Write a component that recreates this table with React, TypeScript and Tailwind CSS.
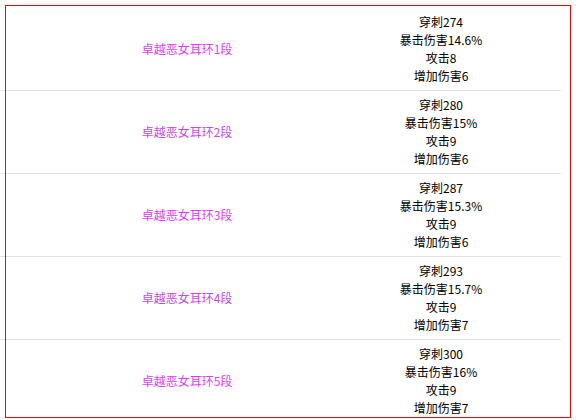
const rows = [
  { name: "卓越恶女耳环1段", stats: ["穿刺274", "暴击伤害14.6%", "攻击8", "增加伤害6"] },
  { name: "卓越恶女耳环2段", stats: ["穿刺280", "暴击伤害15%", "攻击9", "增加伤害6"] },
  { name: "卓越恶女耳环3段", stats: ["穿刺287", "暴击伤害15.3%", "攻击9", "增加伤害6"] },
  { name: "卓越恶女耳环4段", stats: ["穿刺293", "暴击伤害15.7%", "攻击9", "增加伤害7"] },
  { name: "卓越恶女耳环5段", stats: ["穿刺300", "暴击伤害16%", "攻击9", "增加伤害7"] },
];

export default function App() {
  return (
    <div className="relative w-[576px] h-[420px] overflow-hidden bg-white text-[12px] leading-[18px] text-black font-['SimSun','Noto_Sans_CJK_SC',sans-serif]">
      <div className="w-[561px] pt-[8px]">
        {rows.map((r, i) => (
          <div
            key={r.name}
            className="grid grid-cols-[53px_268px_240px] border-b border-[#e3e3e3] py-[5px]"
          >
            <div />
            <div
              className={
                "flex items-center justify-center " +
                (i % 2 === 0 ? "text-[#e03cf8]" : "text-[#c04ae8]")
              }
            >
              {r.name}
            </div>
            <div className="flex flex-col items-center">
              {r.stats.map((s) => (
                <span key={s}>{s}</span>
              ))}
            </div>
          </div>
        ))}
      </div>
      {/* red frame sits over the table */}
      <div className="pointer-events-none absolute left-[5px] top-[5px] h-[413px] w-[566px] border border-[#f00]" />
    </div>
  );
}
